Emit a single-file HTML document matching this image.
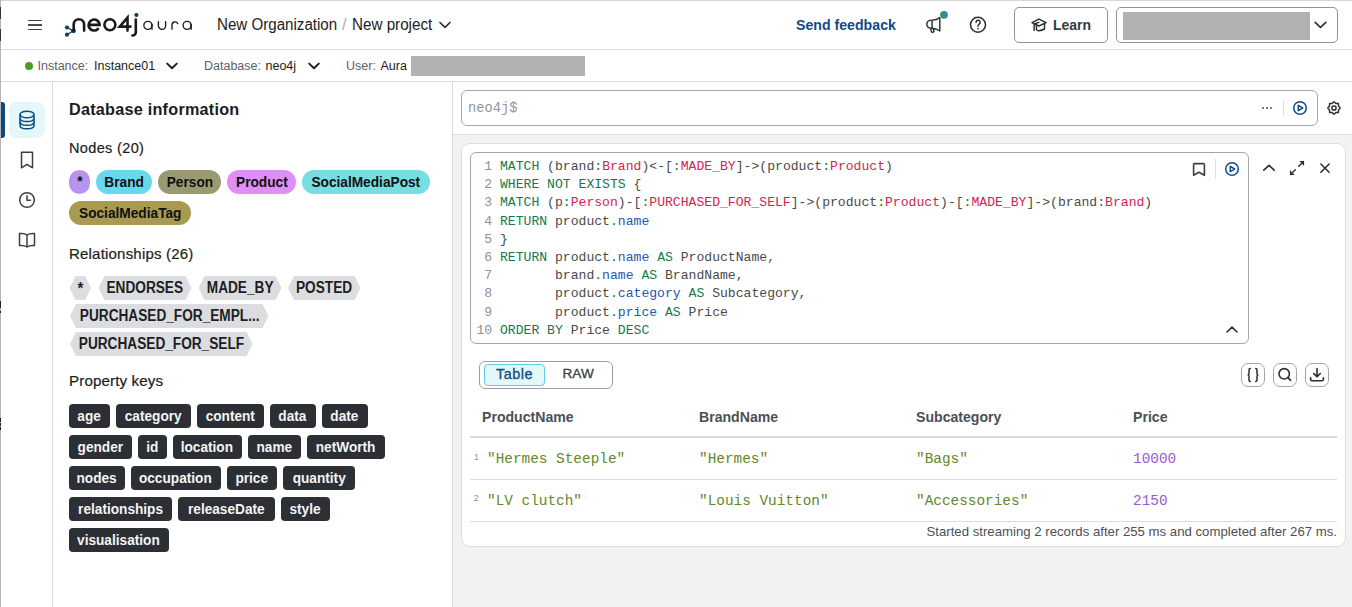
<!DOCTYPE html>
<html><head><meta charset="utf-8">
<style>
*{box-sizing:border-box;margin:0;padding:0}
html,body{width:1352px;height:607px;overflow:hidden;background:#fff;font-family:"Liberation Sans",sans-serif;color:#1a1b1d}
.a{position:absolute}
.hl{position:absolute;height:1px;background:#dcdde0}
.vl{position:absolute;width:1px;background:#dcdde0}
.t{position:absolute;white-space:nowrap;line-height:1}
svg{position:absolute;overflow:visible}
.pill{position:absolute;display:flex;justify-content:center;height:24px;border-radius:12px;font-weight:bold;font-size:13.6px;line-height:24px;text-align:center;color:#111}
.rel{position:absolute;display:flex;justify-content:center;height:24px;font-weight:bold;font-size:13.75px;line-height:24px;text-align:center;color:#1d1f22;background:#dcdde0;clip-path:polygon(0 50%,6px 0,calc(100% - 6px) 0,100% 50%,calc(100% - 6px) 100%,6px 100%)}
.key{position:absolute;display:flex;justify-content:center;height:24px;border-radius:4px;background:#2c2f34;color:#f4f4f4;font-weight:bold;font-size:13.7px;line-height:24px;text-align:center}
.code{position:absolute;font-family:"Liberation Mono",monospace;font-size:13.1px;line-height:18.2px;white-space:pre;color:#4a4a4a}
.ln{color:#8c9097}
.k{color:#137a4d}
.lb{color:#d81d4f}
.pr{color:#1d57b0}
.cell{position:absolute;font-family:"Liberation Mono",monospace;font-size:15.4px;line-height:1;white-space:pre;color:#62882c;transform:scaleX(0.935);transform-origin:0 0;margin-top:-1px}
.th{position:absolute;font-weight:bold;font-size:15px;line-height:1;color:#4b4f56;white-space:nowrap;transform:scaleX(0.94);transform-origin:0 0;margin-top:-2.2px}
.pill span,.rel span,.key span{display:block;flex:none;white-space:nowrap;transform:scaleX(var(--sx,0.855));transform-origin:50% 50%;font-size:16px;line-height:23.8px;vertical-align:top}
.key span{font-size:14px;--sx:0.975;line-height:24px}
.pill span{font-size:15.3px;--sx:0.895;line-height:23.9px}
.rel span{font-size:15.6px;--sx:0.875;line-height:24px}
</style></head><body>
<!-- frame artifacts -->
<div class="hl" style="left:0;top:0;width:1352px;background:#d3d8d6"></div>
<div class="vl" style="left:0;top:0;height:607px;background:#b5b5b5"></div>
<div class="vl" style="left:0;top:7px;height:12px;background:#333"></div>
<div class="vl" style="left:0;top:29px;height:12px;background:#333"></div>
<div class="vl" style="left:0;top:301px;height:7px;background:#222"></div>
<div class="vl" style="left:0;top:311px;height:2px;background:#222"></div>
<div class="vl" style="left:0;top:418px;height:4px;background:#222"></div>
<div class="vl" style="left:0;top:423px;height:3px;background:#222"></div>
<div class="vl" style="left:0;top:427px;height:3px;background:#222"></div>

<!-- top bar -->
<div class="hl" style="left:1px;top:49px;width:1351px"></div>
<div class="hl" style="left:1px;top:81px;width:1351px"></div>
<div class="vl" style="left:52px;top:82px;height:525px"></div>
<div class="vl" style="left:452px;top:82px;height:525px"></div>


<!-- hamburger -->
<div class="a" style="left:27.5px;top:19.8px;width:14.5px;height:1.6px;background:#3b3e44;border-radius:1px"></div>
<div class="a" style="left:27.5px;top:24.2px;width:14.5px;height:1.6px;background:#4a4d53;border-radius:0"></div>
<div class="a" style="left:27.5px;top:28.6px;width:14.5px;height:1.6px;background:#3b3e44;border-radius:1px"></div>

<!-- logo -->
<svg style="left:0;top:0" width="200" height="45" viewBox="0 0 200 45">
 <g fill="none" stroke="#0f3f66" stroke-width="1.3"><path d="M67 27.5 L73.3 30.8 L67 34.7"/></g>
 <g fill="#0f3f66"><circle cx="67" cy="27.5" r="2.1"/><circle cx="73.5" cy="30.8" r="2.4"/><circle cx="67" cy="34.7" r="2.1"/><circle cx="136.4" cy="15" r="2.1"/></g>
 <g fill="none" stroke="#1a1b1d" stroke-width="2.6" stroke-linecap="round">
  <path d="M73.7 31 V24.4 A5.2 5.2 0 0 1 84.1 24.4 V30.6"/>
  <path d="M88.6 24.9 H99.6 A5.5 5.5 0 1 0 97.9 29"/>
  <circle cx="109.9" cy="24.7" r="5.5"/>
  <path d="M127.5 30.6 V17.6 L119.7 26.6 H130.5"/>
  <path d="M135.8 19.6 V32.4 A3.3 3.3 0 0 1 132.4 35.5"/>
 </g>
 <g fill="none" stroke="#1a1b1d" stroke-width="1.35" stroke-linecap="round">
  <circle cx="147.9" cy="25.35" r="4.05"/><path d="M152 24.3 V29.3"/>
  <path d="M158.4 21.6 V25.7 A3.6 3.6 0 0 0 165.6 25.7 V21.6"/>
  <path d="M172 29.3 V25.2 A3 3 0 0 1 177.7 23.6"/>
  <circle cx="187.1" cy="25.35" r="4.05"/><path d="M191.2 24.3 V29.3"/>
 </g>
</svg>

<div class="t" style="left:217px;top:17px;font-size:16px;transform:scaleX(0.945);transform-origin:0 0;color:#1c1d20">New Organization</div>
<div class="t" style="left:342px;top:17px;font-size:16px;color:#a9acb1">/</div>
<div class="t" style="left:351.5px;top:17px;font-size:16px;transform:scaleX(0.95);transform-origin:0 0;color:#1c1d20">New project</div>
<svg style="left:439px;top:21px" width="12" height="8" viewBox="0 0 12 8"><path d="M1 1.5 L6 6.3 L11 1.5" fill="none" stroke="#2c2f33" stroke-width="1.7" stroke-linecap="round" stroke-linejoin="round"/></svg>

<div class="t" style="left:796px;top:17.1px;font-size:15.3px;font-weight:bold;color:#0f4a85;transform:scaleX(0.925);transform-origin:0 0">Send feedback</div>
<!-- megaphone -->
<svg style="left:920px;top:8px" width="30" height="30" viewBox="0 0 30 30">
 <path d="M12.1 12.1 C5 12.1 5 20.3 12.1 20.3 Z M12.1 12.1 C15 12 18 11 19.8 9.6 V23 C18 21.6 15 20.5 12.1 20.3 M10.6 20.4 L11.4 23.6 A1.3 1.3 0 0 0 13.9 23.2 L13.3 20.6" fill="none" stroke="#2b2e33" stroke-width="1.45" stroke-linejoin="round" stroke-linecap="round"/>
 <circle cx="24" cy="6.85" r="3.95" fill="#3a8a96"/>
</svg>
<!-- help -->
<svg style="left:968px;top:15px" width="20" height="20" viewBox="0 0 20 20">
 <circle cx="10" cy="9.75" r="7.5" fill="none" stroke="#2b2e33" stroke-width="1.5"/>
 <path d="M8 7.4 A2.1 2.1 0 1 1 10.8 9.4 C10.2 9.7 10 10.2 10 11.2" fill="none" stroke="#2b2e33" stroke-width="1.45" stroke-linecap="round"/>
 <circle cx="10" cy="13.6" r="0.85" fill="#2b2e33"/>
</svg>
<!-- learn button -->
<div class="a" style="left:1014px;top:7px;width:94px;height:36px;border:1px solid #8f939a;border-radius:5px"></div>
<svg style="left:1026px;top:14px" width="26" height="22" viewBox="0 0 26 22">
 <path d="M6 8.7 L12.9 5.1 L20.1 8.7 L12.9 12 Z M10.4 11 V15.4 C11.5 16.6 12.3 16.9 12.9 16.8 C14.5 16.6 17 15.8 18.5 15 V10.2 M12.9 8.4 L8.1 10 V16.6" fill="none" stroke="#2b2e33" stroke-width="1.45" stroke-linejoin="round" stroke-linecap="round"/>
</svg>
<div class="t" style="left:1053px;top:16.9px;font-size:15.3px;font-weight:bold;color:#363a40;transform:scaleX(0.915);transform-origin:0 0">Learn</div>
<!-- org dropdown -->
<div class="a" style="left:1116px;top:7px;width:222px;height:36px;border:1px solid #8f939a;border-radius:5px"></div>
<div class="a" style="left:1123px;top:12px;width:187px;height:28px;background:#b2b2b2"></div>
<svg style="left:1314px;top:21px" width="13" height="8" viewBox="0 0 13 8"><path d="M1.2 1.3 L6.5 6.5 L11.8 1.3" fill="none" stroke="#2c2f33" stroke-width="1.7" stroke-linecap="round" stroke-linejoin="round"/></svg>

<!-- second bar -->
<div class="a" style="left:25px;top:61.8px;width:8px;height:8px;border-radius:50%;background:#4f9a2c"></div>
<div class="t" style="left:37.5px;top:60.2px;font-size:12.5px;color:#5b5f66">Instance:</div>
<div class="t" style="left:94px;top:60.2px;font-size:12.5px;color:#1c1d20">Instance01</div>
<svg style="left:165px;top:61px" width="14" height="9" viewBox="0 0 14 9"><path d="M2.2 2.6 L7 7.2 L11.8 2.6" fill="none" stroke="#1f2124" stroke-width="2" stroke-linecap="round" stroke-linejoin="round"/></svg>
<div class="t" style="left:204px;top:60.2px;font-size:12.5px;color:#5b5f66">Database:</div>
<div class="t" style="left:265.5px;top:60.2px;font-size:12.5px;color:#1c1d20">neo4j</div>
<svg style="left:307px;top:61px" width="14" height="9" viewBox="0 0 14 9"><path d="M2.2 2.6 L7 7.2 L11.8 2.6" fill="none" stroke="#1f2124" stroke-width="2" stroke-linecap="round" stroke-linejoin="round"/></svg>
<div class="t" style="left:346px;top:60.2px;font-size:12.5px;color:#5b5f66">User:</div>
<div class="t" style="left:380.5px;top:60.2px;font-size:12.5px;color:#1c1d20">Aura</div>
<div class="a" style="left:411px;top:56px;width:174px;height:20px;background:#b2b2b2"></div>


<!-- left rail -->
<div class="a" style="left:1px;top:102px;width:4px;height:36px;background:#0b4a80;border-radius:0 3px 3px 0"></div>
<div class="a" style="left:9px;top:102px;width:36px;height:36px;background:#e4f7fa;border-radius:8px"></div>
<svg style="left:17px;top:109px" width="20" height="22" viewBox="0 0 20 22">
 <g fill="none" stroke="#0e4c82" stroke-width="1.5">
  <ellipse cx="10" cy="5.5" rx="7" ry="3.3"/>
  <path d="M3 5.5 V16.5 C3 18.4 6.1 19.8 10 19.8 C13.9 19.8 17 18.4 17 16.5 V5.5"/>
  <path d="M3 9.2 C3 11.1 6.1 12.5 10 12.5 C13.9 12.5 17 11.1 17 9.2"/>
  <path d="M3 12.9 C3 14.8 6.1 16.2 10 16.2 C13.9 16.2 17 14.8 17 12.9"/>
 </g>
</svg>
<svg style="left:17px;top:150px" width="20" height="20" viewBox="0 0 20 20">
 <path d="M4.5 2.2 H15.5 V17.8 L10 14.3 L4.5 17.8 Z" fill="none" stroke="#3b3f45" stroke-width="1.5" stroke-linejoin="round"/>
</svg>
<svg style="left:17px;top:190px" width="20" height="20" viewBox="0 0 20 20">
 <circle cx="10" cy="10" r="7.3" fill="none" stroke="#3b3f45" stroke-width="1.5"/>
 <path d="M10 5.8 V10.3 H13.4" fill="none" stroke="#3b3f45" stroke-width="1.5" stroke-linecap="round" stroke-linejoin="round"/>
</svg>
<svg style="left:17px;top:230px" width="20" height="20" viewBox="0 0 20 20">
 <path d="M10 5 C8 3.5 5 3.4 2.5 3.6 V15.5 C5 15.3 8 15.5 10 17 C12 15.5 15 15.3 17.5 15.5 V3.6 C15 3.4 12 3.5 10 5 Z M10 5 V17" fill="none" stroke="#3b3f45" stroke-width="1.5" stroke-linejoin="round"/>
</svg>

<!-- database info panel -->
<div class="t" style="left:69px;top:101px;font-size:16.2px;font-weight:bold;letter-spacing:0.25px;color:#1a1b1d">Database information</div>
<div class="t" style="left:69px;top:141px;font-size:14.5px;letter-spacing:0.35px;-webkit-text-stroke:0.2px #1c1d20;color:#1c1d20">Nodes (20)</div>
<div class="pill" style="left:69px;top:170px;width:21px;background:#b494ee"><span style="margin-top:-1.5px">*</span></div>
<div class="pill" style="left:96px;top:170px;width:56px;background:#68d8ee"><span>Brand</span></div>
<div class="pill" style="left:158px;top:170px;width:63px;background:#9a9a72"><span>Person</span></div>
<div class="pill" style="left:227px;top:170px;width:69px;background:#de8ef4"><span>Product</span></div>
<div class="pill" style="left:302px;top:170px;width:128px;background:#78dde0"><span>SocialMediaPost</span></div>
<div class="pill" style="left:69px;top:201px;width:122px;background:#a89a50"><span>SocialMediaTag</span></div>

<div class="t" style="left:69px;top:245.5px;font-size:15px;letter-spacing:0.2px;-webkit-text-stroke:0.2px #1c1d20;color:#1c1d20">Relationships (26)</div>
<div class="rel" style="left:69.5px;top:276px;width:21.5px"><span style="margin-top:1px;font-size:17px">*</span></div>
<div class="rel" style="left:98.5px;top:276px;width:93px"><span>ENDORSES</span></div>
<div class="rel" style="left:198.5px;top:276px;width:83px"><span>MADE_BY</span></div>
<div class="rel" style="left:288px;top:276px;width:72.5px"><span>POSTED</span></div>
<div class="rel" style="left:70px;top:304px;width:198.5px"><span>PURCHASED_FOR_EMPL...</span></div>
<div class="rel" style="left:70px;top:332px;width:182.5px"><span>PURCHASED_FOR_SELF</span></div>

<div class="t" style="left:69px;top:373.3px;font-size:15.2px;letter-spacing:0.1px;-webkit-text-stroke:0.2px #1c1d20;color:#1c1d20">Property keys</div>
<div class="key" style="left:69px;top:404px;width:41px"><span>age</span></div>
<div class="key" style="left:116px;top:404px;width:75px"><span>category</span></div>
<div class="key" style="left:197px;top:404px;width:67px"><span>content</span></div>
<div class="key" style="left:270px;top:404px;width:45.5px"><span>data</span></div>
<div class="key" style="left:322px;top:404px;width:45.5px"><span>date</span></div>
<div class="key" style="left:69px;top:435px;width:62.5px"><span>gender</span></div>
<div class="key" style="left:138px;top:435px;width:28.5px"><span>id</span></div>
<div class="key" style="left:173px;top:435px;width:68.5px"><span>location</span></div>
<div class="key" style="left:248px;top:435px;width:52.5px"><span>name</span></div>
<div class="key" style="left:307px;top:435px;width:77.5px"><span>netWorth</span></div>
<div class="key" style="left:69px;top:466px;width:55.5px"><span>nodes</span></div>
<div class="key" style="left:131px;top:466px;width:89.5px"><span>occupation</span></div>
<div class="key" style="left:227px;top:466px;width:49.5px"><span>price</span></div>
<div class="key" style="left:283px;top:466px;width:71.5px"><span>quantity</span></div>
<div class="key" style="left:69px;top:497px;width:102.5px"><span>relationships</span></div>
<div class="key" style="left:178px;top:497px;width:97px"><span>releaseDate</span></div>
<div class="key" style="left:281px;top:497px;width:48.5px"><span>style</span></div>
<div class="key" style="left:69px;top:528px;width:99.5px"><span>visualisation</span></div>


<!-- main area -->
<div class="a" style="left:453px;top:135px;width:899px;height:472px;background:#f1f2f2"></div>
<div class="hl" style="left:453px;top:134px;width:899px"></div>
<div class="a" style="left:461px;top:90px;width:857px;height:36px;border:1px solid #a3a7ad;border-radius:6px"></div>
<div class="t" style="left:467.5px;top:101px;font-family:'Liberation Mono',monospace;font-size:14.6px;color:#90959c;transform:scaleX(0.94);transform-origin:0 0">neo4j$</div>
<div class="a" style="left:1262px;top:106.8px;width:2px;height:2px;border-radius:1px;background:#4b4f56"></div>
<div class="a" style="left:1266px;top:106.8px;width:2px;height:2px;border-radius:1px;background:#4b4f56"></div>
<div class="a" style="left:1270px;top:106.8px;width:2px;height:2px;border-radius:1px;background:#4b4f56"></div>
<div class="a" style="left:1283px;top:100px;width:1px;height:16px;background:#dcdde0"></div>
<svg style="left:1292px;top:100px" width="16" height="16" viewBox="0 0 16 16">
 <circle cx="8" cy="8" r="6.3" fill="none" stroke="#0f4c85" stroke-width="1.5"/>
 <path d="M6.3 5.3 L10.7 8 L6.3 10.7 Z" fill="none" stroke="#0f4c85" stroke-width="1.5" stroke-linejoin="round"/>
</svg>
<svg style="left:1325px;top:99px" width="18" height="18" viewBox="0 0 18 18">
 <polygon points="9.00,2.80 10.88,4.47 13.38,4.62 13.53,7.12 15.20,9.00 13.53,10.88 13.38,13.38 10.88,13.53 9.00,15.20 7.12,13.53 4.62,13.38 4.47,10.88 2.80,9.00 4.47,7.12 4.62,4.62 7.12,4.47" fill="none" stroke="#2b2e33" stroke-width="1.5" stroke-linejoin="round"/>
 <circle cx="9" cy="9" r="2.1" fill="none" stroke="#2b2e33" stroke-width="1.5"/>
</svg>

<!-- result card -->
<div class="a" style="left:461px;top:143px;width:885px;height:404px;background:#fff;border:1px solid #dcdde0;border-radius:9px"></div>
<div class="a" style="left:470px;top:152px;width:779px;height:192px;border:1px solid #a3a7ad;border-radius:6px"></div>
<div class="code" style="left:476.5px;top:158.00px"><span class="ln" style="display:inline-block;width:15.6px;text-align:right">1</span> <span class="k">MATCH</span> (brand<span class="k">:</span><span class="lb">Brand</span>)&lt;-[<span class="k">:</span><span class="lb">MADE_BY</span>]-&gt;(product<span class="k">:</span><span class="lb">Product</span>)</div>
<div class="code" style="left:476.5px;top:176.26px"><span class="ln" style="display:inline-block;width:15.6px;text-align:right">2</span> <span class="k">WHERE NOT EXISTS</span> {</div>
<div class="code" style="left:476.5px;top:193.6px"><span class="ln" style="display:inline-block;width:15.6px;text-align:right">3</span> <span class="k">MATCH</span> (p<span class="k">:</span><span class="lb">Person</span>)-[<span class="k">:</span><span class="lb">PURCHASED_FOR_SELF</span>]-&gt;(product<span class="k">:</span><span class="lb">Product</span>)-[<span class="k">:</span><span class="lb">MADE_BY</span>]-&gt;(brand<span class="k">:</span><span class="lb">Brand</span>)</div>
<div class="code" style="left:476.5px;top:212.78px"><span class="ln" style="display:inline-block;width:15.6px;text-align:right">4</span> <span class="k">RETURN</span> product<span class="k">.</span><span class="pr">name</span></div>
<div class="code" style="left:476.5px;top:231.04px"><span class="ln" style="display:inline-block;width:15.6px;text-align:right">5</span> }</div>
<div class="code" style="left:476.5px;top:249.30px"><span class="ln" style="display:inline-block;width:15.6px;text-align:right">6</span> <span class="k">RETURN</span> product<span class="k">.</span><span class="pr">name</span> <span class="k">AS</span> ProductName,</div>
<div class="code" style="left:476.5px;top:266.7px"><span class="ln" style="display:inline-block;width:15.6px;text-align:right">7</span>        brand<span class="k">.</span><span class="pr">name</span> <span class="k">AS</span> BrandName,</div>
<div class="code" style="left:476.5px;top:284.9px"><span class="ln" style="display:inline-block;width:15.6px;text-align:right">8</span>        product<span class="k">.</span><span class="pr">category</span> <span class="k">AS</span> Subcategory,</div>
<div class="code" style="left:476.5px;top:304.08px"><span class="ln" style="display:inline-block;width:15.6px;text-align:right">9</span>        product<span class="k">.</span><span class="pr">price</span> <span class="k">AS</span> Price</div>
<div class="code" style="left:476.5px;top:322.34px"><span class="ln" style="display:inline-block;width:15.6px;text-align:right">10</span> <span class="k">ORDER BY</span> Price <span class="k">DESC</span></div>
<!-- editor icons -->
<svg style="left:1191px;top:161px" width="16" height="17" viewBox="0 0 16 17">
 <path d="M3.5 2.6 C2.9 2.6 2.6 2.9 2.6 3.5 V14.3 L8 11.3 L13.4 14.3 V3.5 C13.4 2.9 13.1 2.6 12.5 2.6 Z" fill="none" stroke="#3b3f45" stroke-width="1.6" stroke-linejoin="round"/>
</svg>
<div class="a" style="left:1215px;top:159px;width:1px;height:20px;background:#dcdde0"></div>
<svg style="left:1224px;top:161px" width="16" height="16" viewBox="0 0 16 16">
 <circle cx="8" cy="8" r="6.3" fill="none" stroke="#0f4c85" stroke-width="1.5"/>
 <path d="M6.3 5.3 L10.7 8 L6.3 10.7 Z" fill="none" stroke="#0f4c85" stroke-width="1.5" stroke-linejoin="round"/>
</svg>
<svg style="left:1224px;top:324px" width="16" height="10" viewBox="0 0 16 10"><path d="M3 8 L8 3.2 L13 8" fill="none" stroke="#2b2e33" stroke-width="1.6" stroke-linecap="round" stroke-linejoin="round"/></svg>
<svg style="left:1261px;top:162px" width="16" height="10" viewBox="0 0 16 10"><path d="M2.8 8.2 L8 3.3 L13.2 8.2" fill="none" stroke="#2b2e33" stroke-width="1.6" stroke-linecap="round" stroke-linejoin="round"/></svg>
<svg style="left:1288px;top:159px" width="18" height="18" viewBox="0 0 18 18"><path d="M2.6 15.4 L7.3 10.7 M2.6 15.4 V12.3 M2.6 15.4 H5.7 M15.4 2.6 L10.7 7.3 M15.4 2.6 H12.3 M15.4 2.6 V5.7" fill="none" stroke="#2b2e33" stroke-width="1.4" stroke-linecap="round" stroke-linejoin="round"/></svg>
<svg style="left:1317px;top:160px" width="16" height="16" viewBox="0 0 16 16"><path d="M3.9 4 L12.1 12.2 M12.1 4 L3.9 12.2" fill="none" stroke="#2b2e33" stroke-width="1.6" stroke-linecap="round"/></svg>

<!-- toggle -->
<div class="a" style="left:479px;top:361px;width:134px;height:28px;border:1px solid #9b9fa6;border-radius:6px"></div>
<div class="a" style="left:484px;top:364px;width:61px;height:22px;border:1px solid #5ccedd;background:#e4f7fa;border-radius:4px"></div>
<div class="t" style="left:496px;top:367px;font-size:14.4px;letter-spacing:0.5px;-webkit-text-stroke:0.3px #0e4c82;color:#0e4c82">Table</div>
<div class="t" style="left:562.5px;top:367px;font-size:13.6px;-webkit-text-stroke:0.3px #3a3e45;color:#3a3e45">RAW</div>
<!-- action buttons -->
<div class="a" style="left:1241px;top:363px;width:24px;height:24px;border:1px solid #a3a7ad;border-radius:7px"></div>
<div class="a" style="left:1273px;top:363px;width:24px;height:24px;border:1px solid #a3a7ad;border-radius:7px"></div>
<div class="a" style="left:1305px;top:363px;width:24px;height:24px;border:1px solid #a3a7ad;border-radius:7px"></div>
<svg style="left:1241px;top:363px" width="24" height="24" viewBox="0 0 24 24"><path d="M9.3 5.6 C8.3 5.6 8 6.1 8 7.1 V10.4 C8 11.3 7.6 11.7 7.1 11.9 C7.6 12.1 8 12.5 8 13.4 V16.9 C8 17.9 8.3 18.4 9.3 18.4 M14.7 5.6 C15.7 5.6 16 6.1 16 7.1 V10.4 C16 11.3 16.4 11.7 16.9 11.9 C16.4 12.1 16 12.5 16 13.4 V16.9 C16 17.9 15.7 18.4 14.7 18.4" fill="none" stroke="#2b2e33" stroke-width="1.5" stroke-linecap="round" stroke-linejoin="round"/></svg>
<svg style="left:1273px;top:363px" width="24" height="24" viewBox="0 0 24 24"><circle cx="11.2" cy="10.8" r="5.2" fill="none" stroke="#2b2e33" stroke-width="1.6"/><path d="M15 14.6 L17.6 17.4" fill="none" stroke="#2b2e33" stroke-width="1.6" stroke-linecap="round"/></svg>
<svg style="left:1305px;top:363px" width="24" height="24" viewBox="0 0 24 24"><path d="M12 5.5 V13.5 M8.8 10.6 L12 13.8 L15.2 10.6 M5.6 14.8 V16.3 C5.6 17.3 6.1 17.8 7.1 17.8 H16.9 C17.9 17.8 18.4 17.3 18.4 16.3 V14.8" fill="none" stroke="#2b2e33" stroke-width="1.6" stroke-linecap="round" stroke-linejoin="round"/></svg>

<!-- table -->
<div class="th" style="left:482px;top:411px">ProductName</div>
<div class="th" style="left:699px;top:411px">BrandName</div>
<div class="th" style="left:916px;top:411px">Subcategory</div>
<div class="th" style="left:1132.5px;top:411px">Price</div>
<div class="a" style="left:470px;top:436px;width:867px;height:2px;background:#d8d9dc"></div>
<div class="hl" style="left:470px;top:479px;width:867px"></div>
<div class="hl" style="left:470px;top:521px;width:867px"></div>
<div class="t" style="left:474px;top:452.5px;font-size:8.8px;color:#8c9097">1</div>
<div class="t" style="left:473.8px;top:494.3px;font-size:8.8px;color:#8c9097">2</div>
<div class="cell" style="left:487px;top:452.5px">"Hermes Steeple"</div>
<div class="cell" style="left:699px;top:452.5px">"Hermes"</div>
<div class="cell" style="left:916px;top:452.5px">"Bags"</div>
<div class="cell" style="left:1132.5px;top:452.5px;color:#9a5bd3">10000</div>
<div class="cell" style="left:487px;top:494.5px">"LV clutch"</div>
<div class="cell" style="left:699px;top:494.5px">"Louis Vuitton"</div>
<div class="cell" style="left:916px;top:494.5px">"Accessories"</div>
<div class="cell" style="left:1132.5px;top:494.5px;color:#9a5bd3">2150</div>
<div class="t" style="right:15px;top:524.5px;font-size:13.2px;color:#4b4f56">Started streaming 2 records after 255 ms and completed after 267 ms.</div>

</body></html>
